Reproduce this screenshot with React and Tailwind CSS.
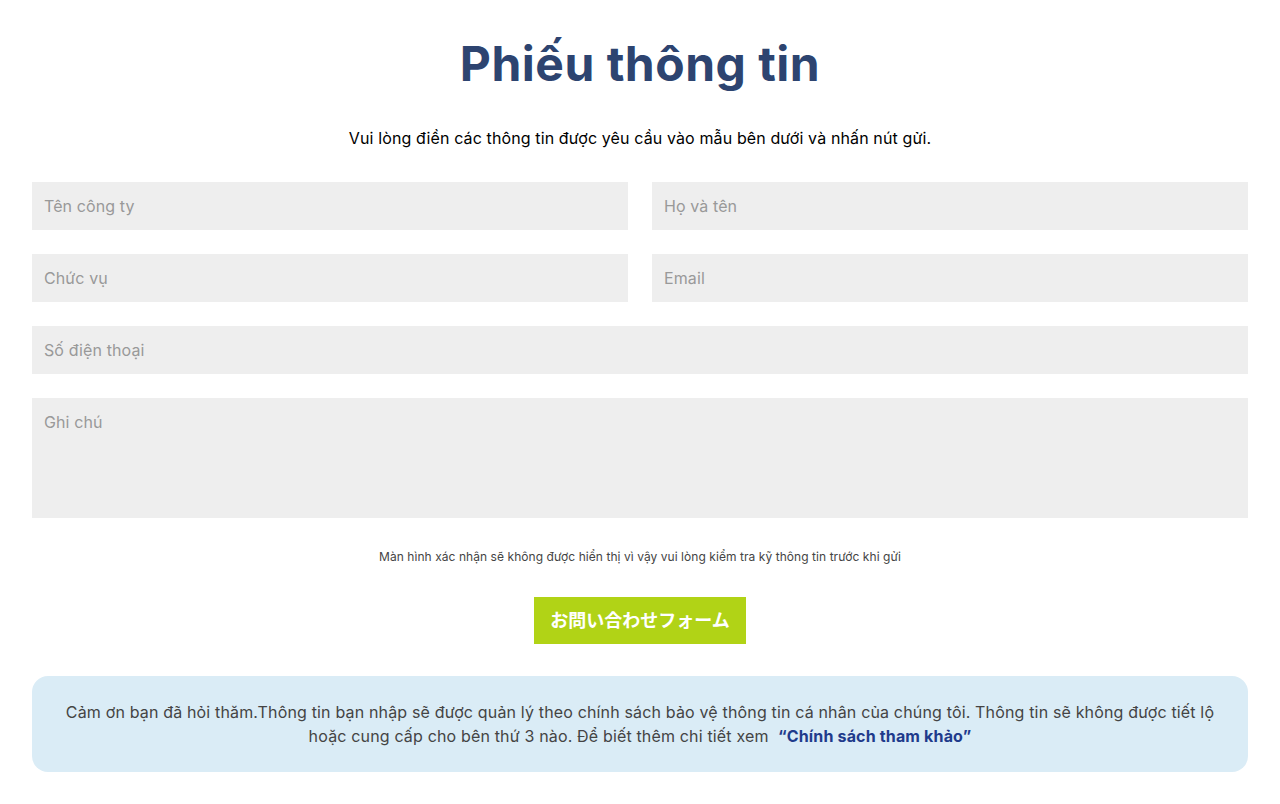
import React from "react";

const fieldCls =
  "w-full h-12 bg-[#eeeeee] px-3 text-base tracking-[0.1px] text-[#333] placeholder:text-[#999] outline-none";

export default function App() {
  return (
    <div
      className="min-h-screen bg-white px-8 pt-[34px] pb-8 text-black"
      style={{ fontFamily: "Inter, 'Noto Sans', 'Noto Sans CJK JP', sans-serif" }}
    >
      <h1 className="text-center text-[48px] leading-[60px] font-bold text-[#2d4470] tracking-[0.5px]">
        Phiếu thông tin
      </h1>
      <p className="mt-[32px] text-center text-base leading-6 tracking-[0.12px]">
        Vui lòng điền các thông tin được yêu cầu vào mẫu bên dưới và nhấn nút gửi.
      </p>

      <form className="mt-[32px] flex flex-col gap-6" onSubmit={(e) => e.preventDefault()}>
        <div className="grid grid-cols-2 gap-6">
          <input className={fieldCls} placeholder="Tên công ty" />
          <input className={fieldCls} placeholder="Họ và tên" />
        </div>
        <div className="grid grid-cols-2 gap-6">
          <input className={fieldCls} placeholder="Chức vụ" />
          <input className={fieldCls} placeholder="Email" />
        </div>
        <input className={fieldCls} placeholder="Số điện thoại" />
        <textarea
          className="w-full h-[120px] resize-none bg-[#eeeeee] px-3 py-[12px] text-base leading-6 tracking-[0.1px] text-[#333] placeholder:text-[#999] outline-none"
          placeholder="Ghi chú"
        />
      </form>

      <p className="mt-[31px] text-center text-xs leading-4 tracking-[0.06px] text-[#444]">
        Màn hình xác nhận sẽ không được hiển thị vì vậy vui lòng kiểm tra kỹ thông tin trước khi gửi
      </p>

      <div className="mt-[32px] flex justify-center">
        <button
          type="submit"
          className="h-[47px] w-[212px] bg-[#b1d316] text-[18px] font-bold text-white"
        >
          お問い合わせフォーム
        </button>
      </div>

      <div className="mt-8 rounded-2xl bg-[#daecf6] px-8 pt-[24px] pb-[24px] text-center text-base leading-6 tracking-[0.16px] text-[#444]">
        Cảm ơn bạn đã hỏi thăm.Thông tin bạn nhập sẽ được quản lý theo chính sách bảo vệ thông tin cá nhân của chúng tôi. Thông tin sẽ không được tiết lộ hoặc cung cấp cho bên thứ 3 nào. Để biết thêm chi tiết xem{"\u00a0 "}
        <a href="#" className="font-bold text-[#1f3b8c]">
          “Chính sách tham khảo”
        </a>
      </div>
    </div>
  );
}
